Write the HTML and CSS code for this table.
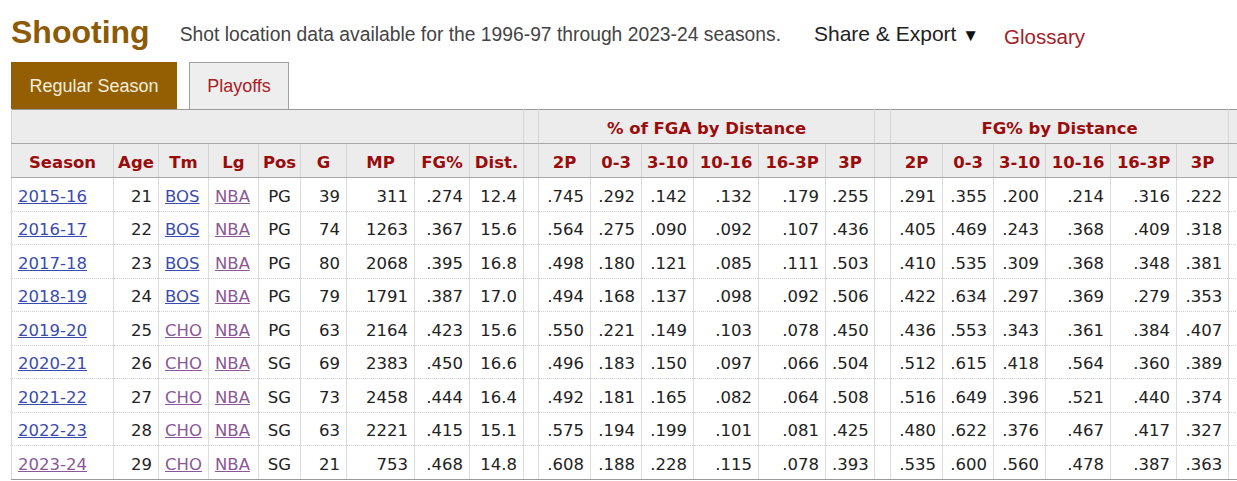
FILE: index.html
```html
<!DOCTYPE html>
<html>
<head>
<meta charset="utf-8">
<link rel="stylesheet" href="styles.css">
</head>
<body>
<div class="page">
  <header class="section-head">
    <h2 class="title">Shooting</h2>
    <p class="note">Shot location data available for the 1996-97 through 2023-24 seasons.</p>
    <span class="share">Share &amp; Export <span class="arrow">▼</span></span>
    <a class="glossary" href="#">Glossary</a>
  </header>
  <nav class="tabs">
    <span class="tab current">Regular Season</span>
    <span class="tab">Playoffs</span>
  </nav>
  <div class="table-wrap">
    <table class="stats">
      <colgroup>
        <col style="width:102px"><col style="width:45px"><col style="width:50px"><col style="width:50px"><col style="width:42px"><col style="width:46px"><col style="width:68px"><col style="width:55px"><col style="width:54px">
        <col style="width:15px">
        <col style="width:52px"><col style="width:51px"><col style="width:52px"><col style="width:65px"><col style="width:67px"><col style="width:49px">
        <col style="width:16px">
        <col style="width:52px"><col style="width:51px"><col style="width:52px"><col style="width:65px"><col style="width:66px"><col style="width:52px">
        <col style="width:16px">
      </colgroup>
      <thead>
        <tr class="over">
          <th colspan="9"></th>
          <th class="sp"></th>
          <th colspan="6">% of FGA by Distance</th>
          <th class="sp"></th>
          <th colspan="6">FG% by Distance</th>
          <th class="sp"></th>
        </tr>
        <tr class="cols">
          <th>Season</th><th>Age</th><th>Tm</th><th>Lg</th><th>Pos</th><th>G</th><th>MP</th><th>FG%</th><th>Dist.</th>
          <th class="sp"></th>
          <th>2P</th><th>0-3</th><th>3-10</th><th>10-16</th><th>16-3P</th><th>3P</th>
          <th class="sp"></th>
          <th>2P</th><th>0-3</th><th>3-10</th><th>10-16</th><th>16-3P</th><th>3P</th>
          <th class="sp"></th>
        </tr>
      </thead>
      <tbody>
        <tr><td class="l"><a href="#">2015-16</a></td><td>21</td><td class="l"><a href="#">BOS</a></td><td class="l"><a class="v" href="#">NBA</a></td><td class="c">PG</td><td>39</td><td>311</td><td>.274</td><td>12.4</td><td class="sp"></td><td>.745</td><td>.292</td><td>.142</td><td>.132</td><td>.179</td><td>.255</td><td class="sp"></td><td>.291</td><td>.355</td><td>.200</td><td>.214</td><td>.316</td><td>.222</td><td class="sp"></td></tr>
        <tr><td class="l"><a href="#">2016-17</a></td><td>22</td><td class="l"><a href="#">BOS</a></td><td class="l"><a class="v" href="#">NBA</a></td><td class="c">PG</td><td>74</td><td>1263</td><td>.367</td><td>15.6</td><td class="sp"></td><td>.564</td><td>.275</td><td>.090</td><td>.092</td><td>.107</td><td>.436</td><td class="sp"></td><td>.405</td><td>.469</td><td>.243</td><td>.368</td><td>.409</td><td>.318</td><td class="sp"></td></tr>
        <tr><td class="l"><a href="#">2017-18</a></td><td>23</td><td class="l"><a href="#">BOS</a></td><td class="l"><a class="v" href="#">NBA</a></td><td class="c">PG</td><td>80</td><td>2068</td><td>.395</td><td>16.8</td><td class="sp"></td><td>.498</td><td>.180</td><td>.121</td><td>.085</td><td>.111</td><td>.503</td><td class="sp"></td><td>.410</td><td>.535</td><td>.309</td><td>.368</td><td>.348</td><td>.381</td><td class="sp"></td></tr>
        <tr><td class="l"><a href="#">2018-19</a></td><td>24</td><td class="l"><a href="#">BOS</a></td><td class="l"><a class="v" href="#">NBA</a></td><td class="c">PG</td><td>79</td><td>1791</td><td>.387</td><td>17.0</td><td class="sp"></td><td>.494</td><td>.168</td><td>.137</td><td>.098</td><td>.092</td><td>.506</td><td class="sp"></td><td>.422</td><td>.634</td><td>.297</td><td>.369</td><td>.279</td><td>.353</td><td class="sp"></td></tr>
        <tr><td class="l"><a href="#">2019-20</a></td><td>25</td><td class="l"><a class="v" href="#">CHO</a></td><td class="l"><a class="v" href="#">NBA</a></td><td class="c">PG</td><td>63</td><td>2164</td><td>.423</td><td>15.6</td><td class="sp"></td><td>.550</td><td>.221</td><td>.149</td><td>.103</td><td>.078</td><td>.450</td><td class="sp"></td><td>.436</td><td>.553</td><td>.343</td><td>.361</td><td>.384</td><td>.407</td><td class="sp"></td></tr>
        <tr><td class="l"><a href="#">2020-21</a></td><td>26</td><td class="l"><a class="v" href="#">CHO</a></td><td class="l"><a class="v" href="#">NBA</a></td><td class="c">SG</td><td>69</td><td>2383</td><td>.450</td><td>16.6</td><td class="sp"></td><td>.496</td><td>.183</td><td>.150</td><td>.097</td><td>.066</td><td>.504</td><td class="sp"></td><td>.512</td><td>.615</td><td>.418</td><td>.564</td><td>.360</td><td>.389</td><td class="sp"></td></tr>
        <tr><td class="l"><a href="#">2021-22</a></td><td>27</td><td class="l"><a class="v" href="#">CHO</a></td><td class="l"><a class="v" href="#">NBA</a></td><td class="c">SG</td><td>73</td><td>2458</td><td>.444</td><td>16.4</td><td class="sp"></td><td>.492</td><td>.181</td><td>.165</td><td>.082</td><td>.064</td><td>.508</td><td class="sp"></td><td>.516</td><td>.649</td><td>.396</td><td>.521</td><td>.440</td><td>.374</td><td class="sp"></td></tr>
        <tr><td class="l"><a href="#">2022-23</a></td><td>28</td><td class="l"><a class="v" href="#">CHO</a></td><td class="l"><a class="v" href="#">NBA</a></td><td class="c">SG</td><td>63</td><td>2221</td><td>.415</td><td>15.1</td><td class="sp"></td><td>.575</td><td>.194</td><td>.199</td><td>.101</td><td>.081</td><td>.425</td><td class="sp"></td><td>.480</td><td>.622</td><td>.376</td><td>.467</td><td>.417</td><td>.327</td><td class="sp"></td></tr>
        <tr><td class="l"><a class="v" href="#">2023-24</a></td><td>29</td><td class="l"><a class="v" href="#">CHO</a></td><td class="l"><a class="v" href="#">NBA</a></td><td class="c">SG</td><td>21</td><td>753</td><td>.468</td><td>14.8</td><td class="sp"></td><td>.608</td><td>.188</td><td>.228</td><td>.115</td><td>.078</td><td>.393</td><td class="sp"></td><td>.535</td><td>.600</td><td>.560</td><td>.478</td><td>.387</td><td>.363</td><td class="sp"></td></tr>
      </tbody>
    </table>
  </div>
</div>
</body>
</html>
```
FILE: styles.css
```css
html, body {
  margin: 0;
  padding: 0;
  background: #fff;
  overflow: hidden;
}
.page {
  padding-left: 11px;
  font-family: "Liberation Sans", Arial, sans-serif;
}
.section-head {
  display: flex;
  align-items: flex-start;
  height: 62px;
  box-sizing: border-box;
  white-space: nowrap;
}
.title {
  margin: 16px 0 0 0;
  font-size: 32px;
  line-height: 32px;
  font-weight: bold;
  color: #8d5a06;
}
.note {
  margin: 25px 0 0 30px;
  font-size: 19.3px;
  line-height: 19px;
  color: #444;
}
.share {
  margin: 23px 0 0 33px;
  font-size: 21px;
  line-height: 21px;
  color: #222;
}
.arrow {
  font-size: 17px;
  color: #111;
}
.glossary {
  margin: 26px 0 0 25px;
  font-size: 20.5px;
  line-height: 21px;
  color: #a32126;
  text-decoration: none;
}
.tabs {
  display: flex;
  gap: 12px;
  height: 47px;
}
.tab {
  display: flex;
  align-items: center;
  justify-content: center;
  box-sizing: border-box;
  height: 47px;
  width: 100px;
  font-size: 18px;
  color: #a82226;
  background: #eeeeee;
  border: 1px solid #a0a0a0;
  border-bottom: none;
}
.tab.current {
  width: 166px;
  background: #935f02;
  border-color: #935f02;
  color: #f6eedb;
}
.table-wrap {
  overflow: hidden;
}
.stats {
  table-layout: fixed;
  border-collapse: collapse;
  width: 1234px;
  font-family: "DejaVu Sans", Verdana, sans-serif;
  font-size: 16.5px;
  color: #222;
  border-top: 1px solid #999;
  border-left: 1px solid #999;
  border-bottom: 1px solid #999;
}
.stats th {
  background: #ececec;
  color: #9a0c0c;
  font-weight: bold;
  text-align: center;
  height: 34px;
  padding: 4px 2px 0;
  box-sizing: border-box;
  white-space: nowrap;
  border-left: 1px solid #d4d4d4;
  border-right: 1px solid #d4d4d4;
  border-bottom: 1px solid #a8a8a8;
}
.stats td {
  height: 33.5px;
  padding: 4px 6px 0;
  box-sizing: border-box;
  text-align: right;
  white-space: nowrap;
  border-left: 1px solid #dcdcdc;
  border-right: 1px solid #dcdcdc;
  border-bottom: 1px dotted #cfcfcf;
}
.stats tbody tr:last-child td {
  border-bottom: 1px solid #999;
}
.stats td.l {
  text-align: left;
}
.stats td.c {
  text-align: center;
}
.stats a {
  color: #3a4bb0;
}
.stats a.v {
  color: #8a5896;
}
```
